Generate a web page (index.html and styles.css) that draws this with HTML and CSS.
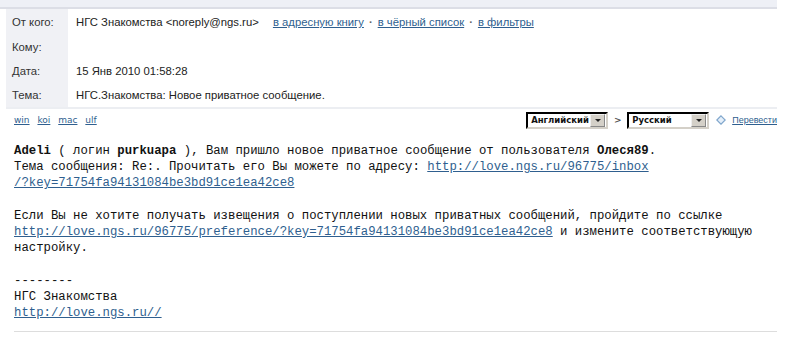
FILE: index.html
```html
<!DOCTYPE html>
<html>
<head>
  <title>НГС Знакомства: Новое приватное сообщение</title>
  <link rel="stylesheet" href="styles.css">
</head>
<body>
  <div class="top-band"></div>

  <table class="headers">
    <tr class="row-from">
      <td class="label">От кого:</td>
      <td class="value">
        НГС Знакомства &lt;noreply@ngs.ru&gt;
        <span class="actions">
          <a href="#">в адресную книгу</a><span class="dot">·</span><a href="#">в чёрный список</a><span class="dot">·</span><a href="#">в фильтры</a>
        </span>
      </td>
    </tr>
    <tr>
      <td class="label">Кому:</td>
      <td class="value"></td>
    </tr>
    <tr>
      <td class="label">Дата:</td>
      <td class="value">15 Янв 2010 01:58:28</td>
    </tr>
    <tr>
      <td class="label">Тема:</td>
      <td class="value">НГС.Знакомства: Новое приватное сообщение.</td>
    </tr>
  </table>

  <div class="toolbar">
    <div class="charsets">
      <a href="#">win</a>
      <a href="#">koi</a>
      <a href="#">mac</a>
      <a href="#">ulf</a>
    </div>
    <div class="translate">
      <span class="fake-select"><span class="sel-text">Английский</span><span class="sel-btn"></span></span>
      <span class="arrow">&gt;</span>
      <span class="fake-select"><span class="sel-text">Русский</span><span class="sel-btn"></span></span>
      <svg class="tr-icon" width="10" height="10" viewBox="0 0 10 10">
        <polygon points="5,0.8 9.2,5 5,9.2 0.8,5" fill="#e6f0fa" stroke="#7fa6cc" stroke-width="1.2"/>
      </svg>
      <a href="#" class="tr-link">Перевести</a>
    </div>
  </div>

  <div class="message">
    <b>Adeli</b> ( логин <b>purkuapa</b> ), Вам пришло новое приватное сообщение от пользователя <b>Олеся89</b>.<br>
    Тема сообщения: Re:. Прочитать его Вы можете по адресу: <a href="#">http://love.ngs.ru/96775/inbox<br>/?key=71754fa94131084be3bd91ce1ea42ce8</a><br>
    <br>
    Если Вы не хотите получать извещения о поступлении новых приватных сообщений, пройдите по ссылке<br>
    <a href="#">http://love.ngs.ru/96775/preference/?key=71754fa94131084be3bd91ce1ea42ce8</a> и измените соответствующую<br>
    настройку.<br>
    <br>
    --------<br>
    НГС Знакомства<br>
    <a href="#">http://love.ngs.ru//</a>
  </div>

  <div class="bottom-rule"></div>
</body>
</html>
```

FILE: styles.css
```css
body {
  margin: 0;
  background-color: #ffffff;
  font-family: "Liberation Sans", Arial, sans-serif;
  color: #222222;
}

a {
  color: #2f5f8f;
}

.top-band {
  width: 777px;
  height: 7px;
  background-color: #eef0f6;
  border-bottom: 2px solid #dcdee6;
}

.headers {
  margin-left: 6px;
  width: 771px;
  border-collapse: collapse;
  font-size: 11.3px;
  border-bottom: 2px solid #eceef2;
}

.headers td {
  height: 24px;
  padding: 0;
  vertical-align: middle;
}

.headers .row-from td {
  height: 26px;
}

.label {
  width: 56px;
  padding-left: 6px !important;
  background-color: #f0f1f5;
  color: #333333;
}

.value {
  padding-left: 8px !important;
  color: #222222;
}

.actions {
  margin-left: 11px;
}

.actions a {
  color: #2f5f8f;
}

.dot {
  display: inline-block;
  margin: 0 5px;
  color: #666666;
  font-weight: bold;
}

.toolbar {
  display: flex;
  justify-content: space-between;
  align-items: center;
  width: 763px;
  margin-left: 14px;
  margin-top: 1px;
  height: 20px;
}

.charsets {
  font-family: Verdana, "DejaVu Sans", sans-serif;
  font-size: 9px;
}

.charsets a {
  margin-right: 5px;
}

.translate {
  display: flex;
  align-items: center;
  font-family: "DejaVu Sans", Tahoma, sans-serif;
  font-size: 9px;
}

.fake-select {
  display: flex;
  align-items: center;
  flex-shrink: 0;
  box-sizing: border-box;
  width: 82px;
  height: 17px;
  border: 2px inset #d4d0c8;
  border-top-color: #555555;
  border-left-color: #555555;
  background-color: #ffffff;
}

.sel-text {
  flex: 1;
  padding-left: 3px;
  color: #111111;
  font-weight: bold;
  font-size: 8.5px;
}

.sel-btn {
  position: relative;
  width: 13px;
  height: 11px;
  margin-right: 1px;
  background-color: #d4d0c8;
  border: 1px solid #888888;
  border-top-color: #eeeeee;
  border-left-color: #eeeeee;
}

.sel-btn::after {
  content: "";
  position: absolute;
  left: 4px;
  top: 4px;
  border-left: 3px solid transparent;
  border-right: 3px solid transparent;
  border-top: 3px solid #222222;
}

.arrow {
  flex-shrink: 0;
  width: 19px;
  text-align: center;
  color: #555555;
  font-weight: bold;
}

.tr-icon {
  flex-shrink: 0;
  margin-left: 7px;
  margin-right: 6px;
}

.tr-link {
  font-family: "Liberation Sans", Arial, sans-serif;
  font-size: 9px;
}

.message {
  margin: 13px 0 0 14px;
  font-family: "Liberation Mono", "Courier New", monospace;
  font-size: 12.3px;
  line-height: 16.2px;
  color: #111111;
}

.message a {
  color: #2f5f8f;
}

.bottom-rule {
  width: 763px;
  margin: 10px 0 0 14px;
  border-top: 1px solid #dddddd;
}
```
